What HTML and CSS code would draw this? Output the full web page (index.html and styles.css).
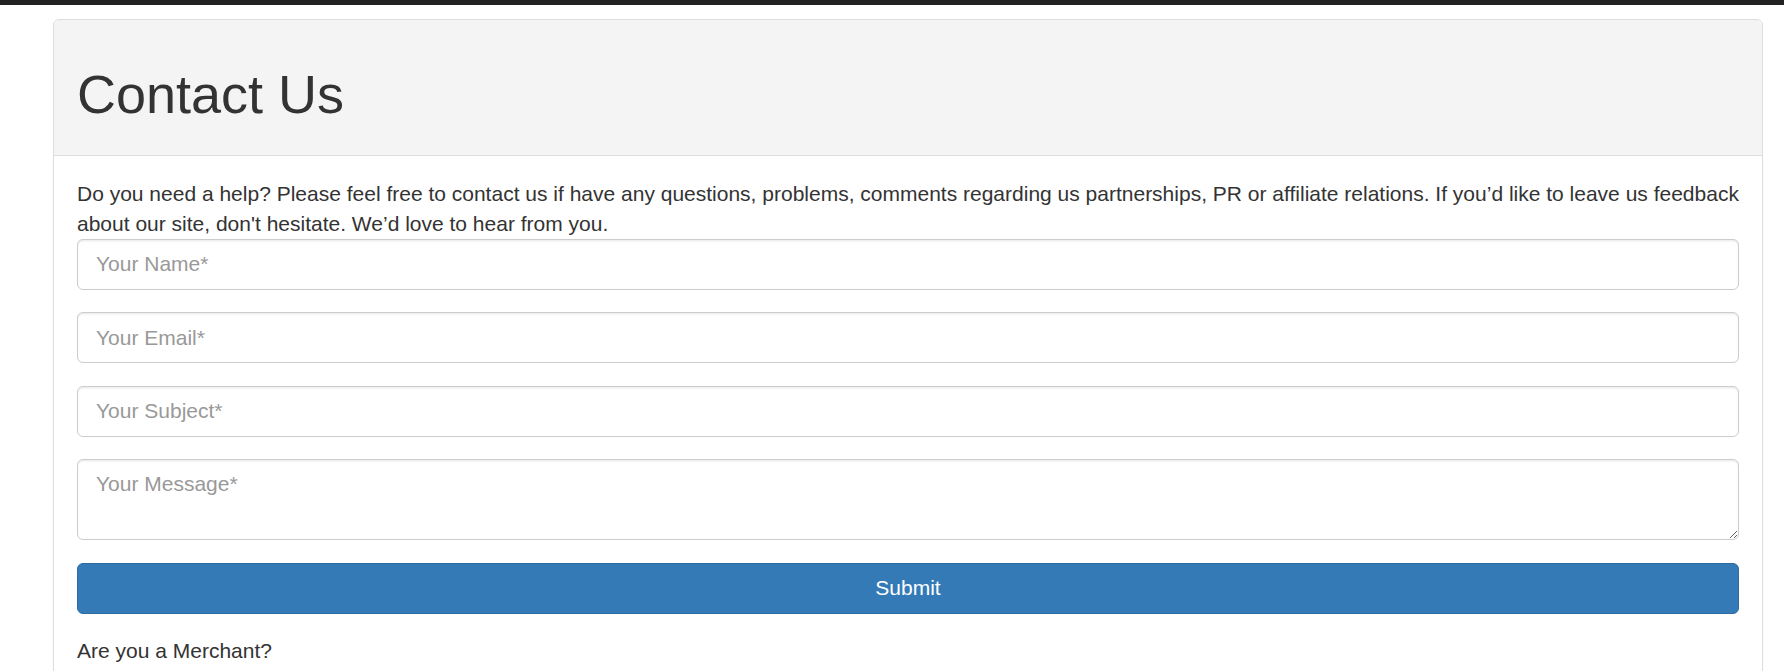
FILE: index.html
```html
<!DOCTYPE html>
<html lang="en">
<head>
<meta charset="utf-8">
<title>Contact Us</title>
<link rel="stylesheet" href="styles.css">
</head>
<body>
<div class="topbar"></div>
<main class="page">
  <section class="panel">
    <header class="panel-heading">
      <h1 class="panel-title">Contact Us</h1>
    </header>
    <div class="panel-body">
      <p class="intro">Do you need a help? Please feel free to contact us if have any questions, problems, comments regarding us partnerships, PR or affiliate relations. If you’d like to leave us feedback about our site, don't hesitate. We’d love to hear from you.</p>
      <form class="contact-form" onsubmit="return false;">
        <div class="form-group"><input class="form-control" type="text" placeholder="Your Name*"></div>
        <div class="form-group"><input class="form-control" type="email" placeholder="Your Email*"></div>
        <div class="form-group"><input class="form-control" type="text" placeholder="Your Subject*"></div>
        <div class="form-group"><textarea class="form-control message" placeholder="Your Message*"></textarea></div>
        <div class="form-group"><button class="btn-submit" type="submit">Submit</button></div>
      </form>
      <p class="merchant">Are you a Merchant?</p>
    </div>
  </section>
</main>
</body>
</html>
```

FILE: styles.css
```css
html, body {
  margin: 0;
  padding: 0;
  overflow: hidden;
  background: #fff;
}

body {
  font-family: "Liberation Sans", Arial, Helvetica, sans-serif;
  font-size: 21px;
  line-height: 30px;
  color: #333;
}

.topbar {
  height: 5px;
  background: #222;
}

.page {
  padding: 14px 21px 0 53px;
}

.panel {
  border: 1px solid #ddd;
  border-radius: 6px;
  background: #fff;
  box-shadow: 0 1px 1px rgba(0, 0, 0, 0.05);
}

.panel-heading {
  background: #f4f4f4;
  border-bottom: 1px solid #ddd;
  border-radius: 5px 5px 0 0;
  padding: 15px 23px;
}

.panel-title {
  margin: 30px 0 16px;
  font-size: 54px;
  line-height: 1.1;
  font-weight: 500;
  color: #333;
}

.panel-body {
  padding: 22.5px 23px;
}

.intro {
  margin: 0 -16px 0 0;
}

.contact-form {
  margin: 0;
}

.form-group {
  margin-bottom: 22.5px;
}

.form-control {
  display: block;
  box-sizing: border-box;
  width: 100%;
  height: 51px;
  padding: 9px 18px;
  margin: 0;
  font-family: inherit;
  font-size: 21px;
  line-height: 30px;
  color: #555;
  background: #fff;
  border: 1px solid #ccc;
  border-radius: 6px;
  box-shadow: inset 0 1.5px 1.5px rgba(0, 0, 0, 0.075);
  outline: none;
}

.form-control::placeholder {
  color: #999;
  opacity: 1;
}

.message {
  height: 81px;
  resize: vertical;
}

.btn-submit {
  display: block;
  box-sizing: border-box;
  width: 100%;
  height: 51px;
  padding: 9px 18px;
  font-family: inherit;
  font-size: 21px;
  line-height: 30px;
  color: #fff;
  background: #337ab7;
  border: 1px solid #2e6da4;
  border-radius: 6px;
  cursor: pointer;
}

.merchant {
  margin: 0;
}
```
